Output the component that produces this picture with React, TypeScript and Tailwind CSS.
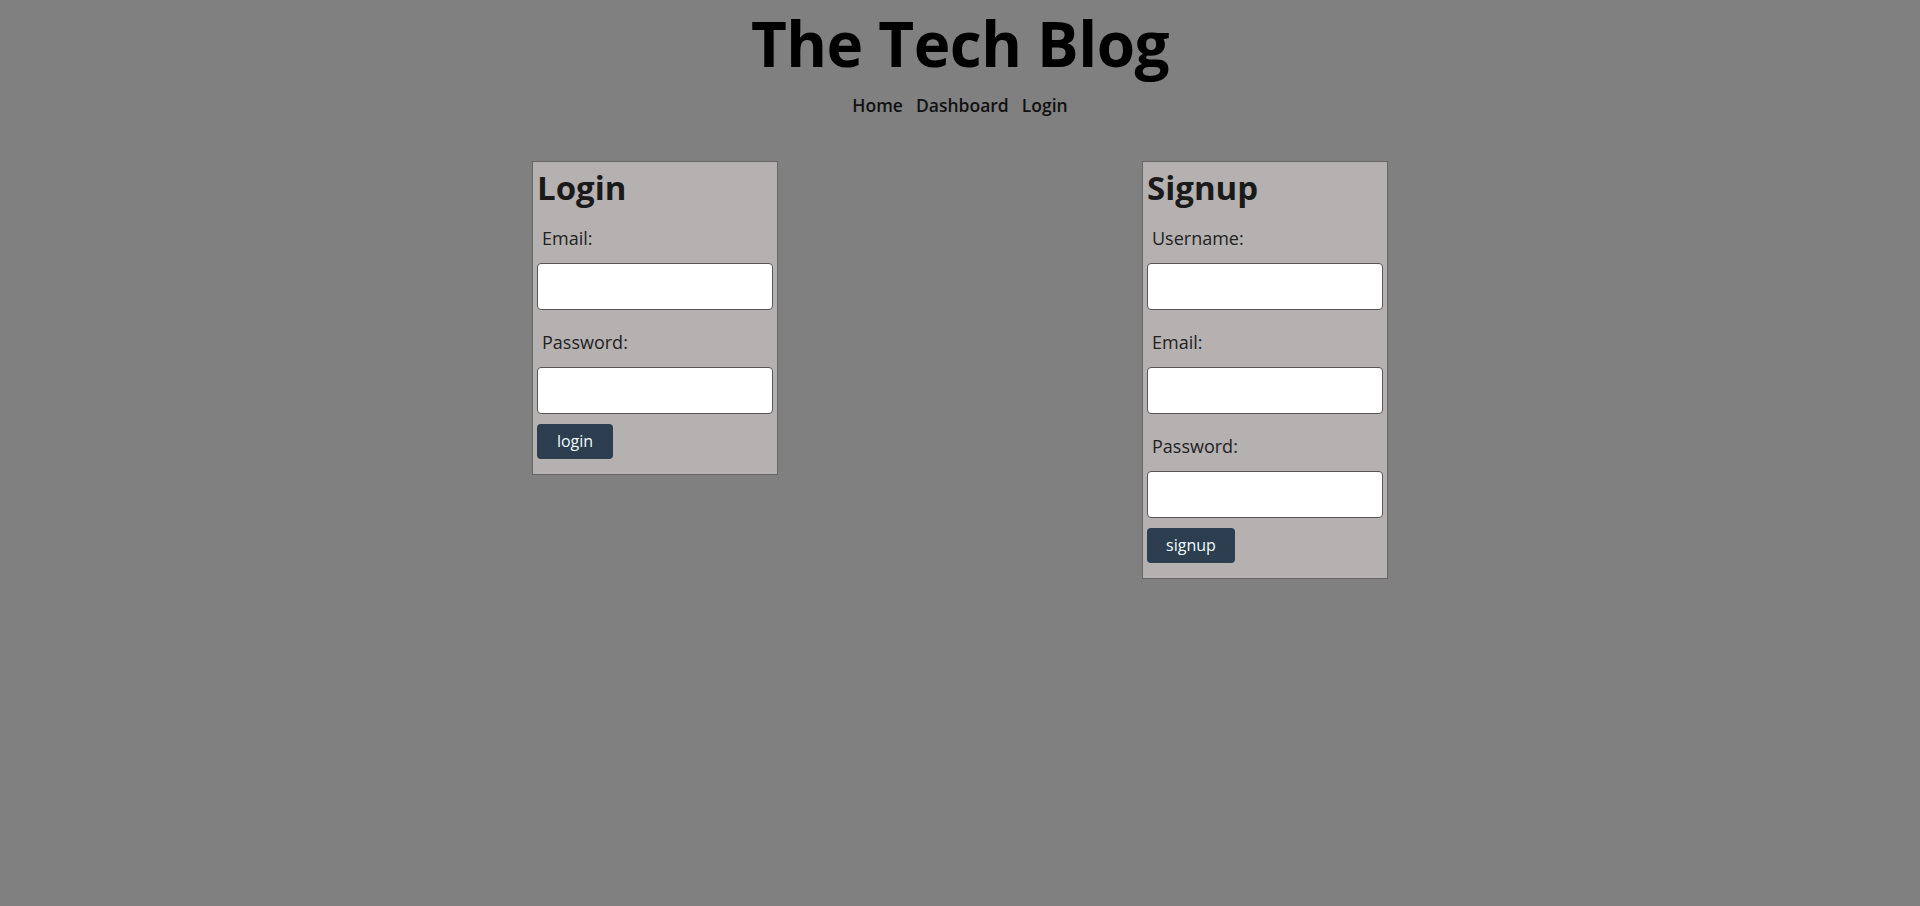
import React from "react"

const font = { fontFamily: '"Open Sans", "Noto Sans", Arial, sans-serif' }

function Field({ label }: { label: string }) {
    return (
        <div>
            <div className="mt-[19px] h-[26px] pl-[5px] text-[18px] leading-[26px] text-[#222]">{label}</div>
            <input
                type="text"
                className="mt-[12px] block h-[47px] w-full rounded-[4px] border border-[#555] bg-white px-2 outline-none"
            />
        </div>
    )
}

function Card({ title, fields, button, buttonWidth }: { title: string; fields: string[]; button: string; buttonWidth: string }) {
    return (
        <div className="w-[246px] border border-[#666] bg-[#b5b1b0] px-1 pt-1 pb-[15px]">
            <h2 className="h-[40px] pt-[2px] text-[33px] font-bold leading-[40px] text-[#1a1a1a]">{title}</h2>
            {fields.map((f) => (
                <Field key={f} label={f} />
            ))}
            <button
                className={`mt-[10px] block h-[35px] rounded-[4px] bg-[#2c3e50] text-[16px] leading-[35px] text-[#f2fbfc] ${buttonWidth}`}
            >
                {button}
            </button>
        </div>
    )
}

export default function App() {
    const navItems = ["Home", "Dashboard", "Login"]

    return (
        <div className="min-h-[906px] w-full bg-[#808080]" style={font}>
            {/* Header */}
            <header className="flex flex-col items-center pt-[3px]">
                <h1 className="h-[80px] text-[62px] font-bold leading-[80px] tracking-[-0.5px] text-black">The Tech Blog</h1>
                <nav className="mt-[10px] flex h-[24px] items-center gap-[13px] text-[17.5px] font-semibold leading-[24px] text-[#111]">
                    {navItems.map((item) => (
                        <a key={item} href="#">
                            {item}
                        </a>
                    ))}
                </nav>
            </header>

            {/* Forms */}
            <main className="mx-auto mt-[44px] flex w-[856px] items-start justify-between">
                <Card title="Login" fields={["Email:", "Password:"]} button="login" buttonWidth="w-[76px]" />
                <Card title="Signup" fields={["Username:", "Email:", "Password:"]} button="signup" buttonWidth="w-[88px]" />
            </main>
        </div>
    )
}
